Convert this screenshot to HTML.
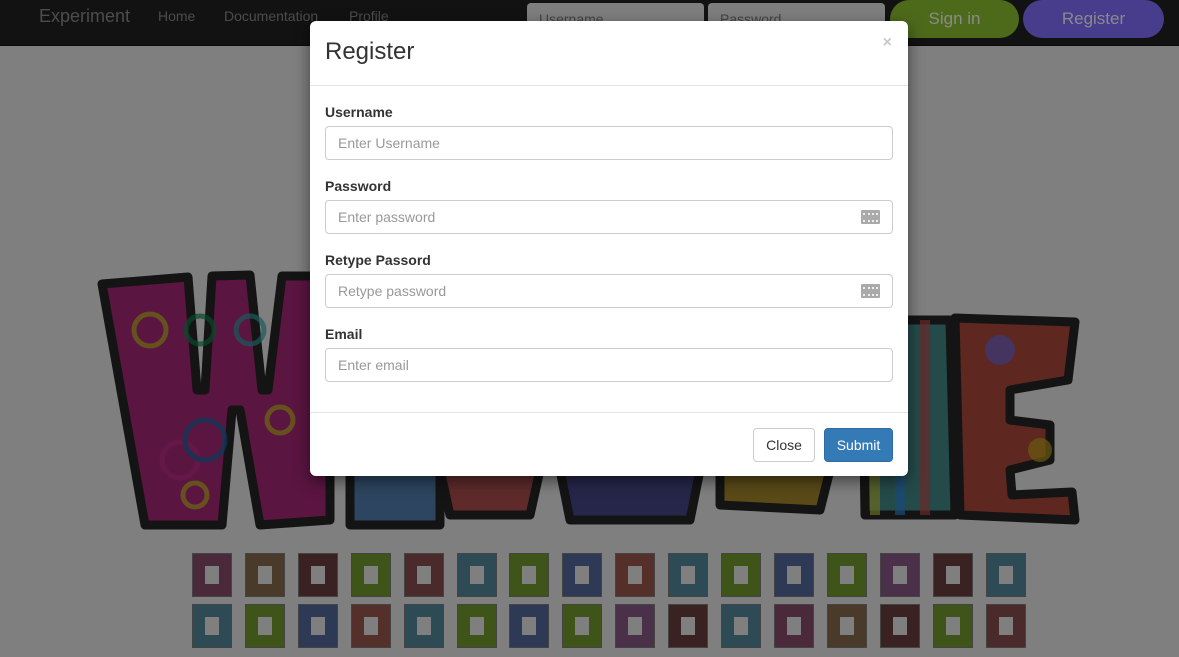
<!DOCTYPE html>
<html><head><meta charset="utf-8"><style>
*{box-sizing:border-box}
body{margin:0;width:1179px;height:657px;overflow:hidden;background:#7f7f7f;font-family:"Liberation Sans",Arial,sans-serif;position:relative}
.nav{position:absolute;left:0;top:0;width:1179px;height:46px;background:#121212;border-bottom:1px solid #0a0a0a}
.nav .brand{position:absolute;left:39px;top:6px;font-size:18px;color:#4d4d4d}
.nav a{position:absolute;top:8px;font-size:14px;color:#4c4c4c}
.nin{position:absolute;top:3px;height:38px;width:177px;background:#7e7e7e;border-radius:4px;color:#444;font-size:14px;padding:8px 12px}
.btn{position:absolute;top:0;height:38px;border-radius:19px;color:#8a8a8a;font-size:17px;text-align:center;line-height:38px}
.modal{position:absolute;left:310px;top:21px;width:598px;height:455px;background:#fff;border-radius:6px;box-shadow:0 5px 15px rgba(0,0,0,.5)}
.mh{height:65px;border-bottom:1px solid #e5e5e5;position:relative}
.mh h4{margin:0;position:absolute;left:15px;top:17px;font-size:24px;font-weight:normal;color:#333}
.x{position:absolute;right:16px;top:13px;font-size:16px;font-weight:bold;color:#c8c8c8}
label{position:absolute;left:15px;font-size:14px;font-weight:bold;color:#333}
.in{position:absolute;left:15px;width:568px;height:34px;border:1px solid #ccc;border-radius:4px;padding:8px 12px;font-size:14px;color:#999}
.kb{position:absolute;right:12px;top:9px;width:19px;height:14px;background:#aaa;border-radius:1px}
.kb:after{content:"";position:absolute;left:2px;top:3px;width:15px;height:5px;border-top:2px dotted #eee;border-bottom:2px dotted #eee}
.mf{position:absolute;left:0;top:391px;width:598px;border-top:1px solid #e5e5e5}
.b2{position:absolute;top:407px;height:34px;border-radius:4px;font-size:14px;line-height:32px;text-align:center}
.t{position:absolute;width:40px;height:44px;border:1px solid #444}
.t:after{content:"";position:absolute;left:12px;top:12px;width:14px;height:18px;background:#7f7f7f}
</style></head><body>
<div class="nav">
<div class="brand">Experiment</div>
<a style="left:158px">Home</a><a style="left:224px">Documentation</a><a style="left:349px">Profile</a>
<div class="nin" style="left:527px">Username</div>
<div class="nin" style="left:708px">Password</div>
<div class="btn" style="left:890px;width:129px;background:#4d6a1b">Sign in</div>
<div class="btn" style="left:1023px;width:141px;background:#473d8c">Register</div>
</div>
<svg style="position:absolute;left:0;top:0" width="1179" height="657">
<g stroke="#141414" stroke-width="9" stroke-linejoin="round">
<polygon points="102,284 188,277 197,390 205,390 212,276 250,275 262,390 268,390 282,276 330,276 330,520 260,525 240,410 232,410 222,525 145,525" fill="#5a1540"/>
<polygon points="350,470 440,470 440,525 350,525" fill="#2d4560"/>
<polygon points="440,470 540,470 530,515 450,515" fill="#5e2a2a"/>
<polygon points="560,470 700,470 690,520 570,520" fill="#26264a"/>
<polygon points="720,470 830,470 820,510 720,505" fill="#5a4a18"/>
<polygon points="862,320 950,320 955,515 865,515" fill="#254a4a"/>
<polygon points="955,318 1075,322 1068,380 1010,390 1010,420 1050,425 1050,460 1010,470 1012,495 1072,492 1075,520 960,515" fill="#5e2820"/>
</g>
<g opacity=".7" fill="none" stroke-width="5">
<circle cx="150" cy="330" r="16" stroke="#6a6a10"/><circle cx="250" cy="330" r="14" stroke="#1a5a5a"/><circle cx="180" cy="460" r="18" stroke="#6a1a4a"/><circle cx="200" cy="330" r="14" stroke="#0a4a2a"/>
<circle cx="205" cy="440" r="20" stroke="#0a3a5a"/><circle cx="280" cy="420" r="13" stroke="#6a6a10"/><circle cx="195" cy="495" r="12" stroke="#6a6a10"/>
</g>
<g opacity=".7">
<rect x="870" y="320" width="10" height="195" fill="#6a6a20"/><rect x="895" y="320" width="10" height="195" fill="#1a4a7a"/><rect x="920" y="320" width="10" height="195" fill="#6a2a2a"/>
<circle cx="1000" cy="350" r="15" fill="#3a3a7a"/><circle cx="1040" cy="450" r="12" fill="#6a5a10"/>
</g>
</svg>
<div id="tiles"></div>
<script>
var c=["#4a2a3a","#4a3a2a","#3a2222","#3e5418","#4a2a2a","#2e4a55","#3e5418","#2e3a55","#55302a","#2e4a55","#3e5418","#2e3a55","#3e5418","#4a3048","#3a2222","#2e4a55"];
var h="";for(var r=0;r<2;r++)for(var i=0;i<16;i++){h+='<div class="t" style="left:'+(192+i*52.9)+'px;top:'+(553+r*51)+'px;background:'+c[(i+r*5)%16]+'"></div>'}
document.getElementById("tiles").innerHTML=h;
</script>
<div class="modal">
<div class="mh"><h4>Register</h4><span class="x">×</span></div>
<label style="top:83px">Username</label>
<div class="in" style="top:105px">Enter Username</div>
<label style="top:157px">Password</label>
<div class="in" style="top:179px">Enter password<span class="kb"></span></div>
<label style="top:231px">Retype Passord</label>
<div class="in" style="top:253px">Retype password<span class="kb"></span></div>
<label style="top:305px">Email</label>
<div class="in" style="top:327px">Enter email</div>
<div class="mf"></div>
<div class="b2" style="left:443px;width:62px;border:1px solid #ccc;color:#333">Close</div>
<div class="b2" style="left:514px;width:69px;background:#337ab7;border:1px solid #2e6da4;color:#fff">Submit</div>
</div>
</body></html>
